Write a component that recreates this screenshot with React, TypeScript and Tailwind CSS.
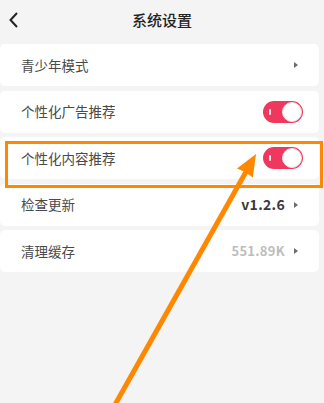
import React from "react";

const Tri = () => (
  <svg width="4" height="6" viewBox="0 0 4 6" className="shrink-0">
    <path d="M0 0 L4 3 L0 6 Z" fill="#6b6b6b" />
  </svg>
);

const Toggle = () => (
  <div className="relative w-[40px] h-[22px] rounded-full bg-[#f0385e] shrink-0">
    <div className="absolute left-[6px] top-[8px] w-[1.5px] h-[6px] bg-white/90 rounded" />
    <div className="absolute right-[1px] top-[1px] w-[20px] h-[20px] rounded-full bg-white border border-[#e5e5e5]" />
  </div>
);

const Row = ({ label, children, pr = "pr-[21px]" }: { label: string; children?: React.ReactNode; pr?: string }) => (
  <div className={`h-[42px] bg-white rounded-[5px] mr-[5px] flex items-center justify-between pl-[21px] ${pr}`}>
    <span className="text-[13.5px] text-[#4a4a4a]">{label}</span>
    <div className="flex items-center gap-[9px]">{children}</div>
  </div>
);

export default function App() {
  return (
    <div
      className="relative w-[324px] h-[403px] bg-[#f4f4f4] overflow-hidden"
      style={{ fontFamily: '"Noto Sans CJK SC", "Noto Sans", sans-serif' }}
    >
      <div className="h-[44px] flex items-center relative">
        <svg width="12" height="18" viewBox="0 0 12 18" className="absolute left-[8px] top-[11px]">
          <path d="M9 2 L2.5 9 L9 16" fill="none" stroke="#222" strokeWidth="2" />
        </svg>
        <div className="w-full text-center text-[15px] font-medium text-[#222] -mt-[4px]">系统设置</div>
      </div>
      <div className="flex flex-col gap-[4.5px]">
        <Row label="青少年模式">
          <Tri />
        </Row>
        <Row label="个性化广告推荐" pr="pr-[16px]">
          <Toggle />
        </Row>
        <Row label="个性化内容推荐" pr="pr-[16px]">
          <Toggle />
        </Row>
        <Row label="检查更新">
          <span className="text-[14px] font-bold text-[#3a3a3a] tracking-[0.3px]">v1.2.6</span>
          <Tri />
        </Row>
        <Row label="清理缓存">
          <span className="text-[13px] font-bold text-[#bdbdbd] tracking-[0.3px]">551.89K</span>
          <Tri />
        </Row>
      </div>
      <div className="absolute left-[5px] top-[141px] w-[318px] h-[47px] border-[3px] border-[#ff8800]" />
      <svg className="absolute left-0 top-0" width="324" height="403" viewBox="0 0 324 403">
        <line x1="112" y1="410" x2="247" y2="170" stroke="#ff8800" strokeWidth="5" />
        <polygon points="256,154 237,168.5 245,172 252.8,177.5" fill="#ff8800" />
      </svg>
    </div>
  );
}
